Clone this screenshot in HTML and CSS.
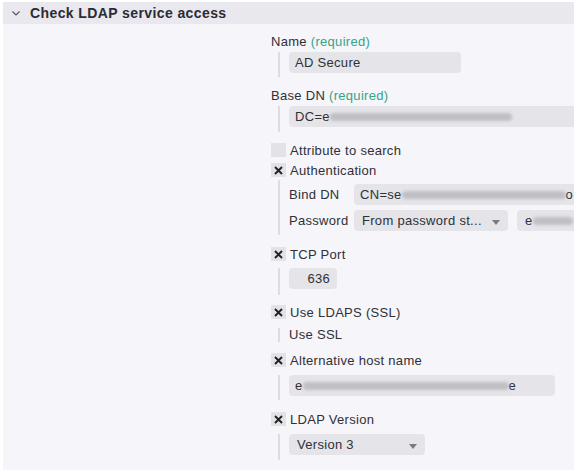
FILE: index.html
```html
<!DOCTYPE html>
<html>
<head>
<meta charset="utf-8">
<link rel="stylesheet" href="styles.css">
</head>
<body>
<div class="page">
  <div class="panel">
    <div class="panel-head">
      <svg class="chev" width="8" height="5" viewBox="0 0 8 5"><path d="M0.5 0.5 L4 4 L7.5 0.5" fill="none" stroke="#555" stroke-width="1.1"/></svg>
      <span class="title">Check LDAP service access</span>
    </div>
    <div class="panel-body">
      <div class="form">
        <div class="label f-name">Name <span class="req">(required)</span></div>
        <div class="block b-name">
          <div class="input w-name">AD Secure</div>
        </div>

        <div class="label f-base">Base DN <span class="req">(required)</span></div>
        <div class="block b-base">
          <div class="input w-base">DC=e<span class="smudge s-base"></span></div>
        </div>

        <div class="check-row r-attr"><span class="cb"></span><span>Attribute to search</span></div>
        <div class="check-row r-auth"><span class="cb"><svg class="x" width="9" height="9" viewBox="0 0 9 9"><path d="M1 1 L8 8 M8 1 L1 8" stroke="#222" stroke-width="1.9"/></svg></span><span>Authentication</span></div>
        <div class="block b-auth">
          <div class="grid">
            <div class="glabel">Bind DN</div>
            <div class="input w-bind">CN=se<span class="smudge s-bind"></span><span class="tail">o</span></div>
            <div class="glabel">Password</div>
            <div class="pw">
              <div class="select w-pwsel">From password st...<span class="arrow"></span></div>
              <div class="input w-pw">e<span class="smudge s-pw"></span></div>
            </div>
          </div>
        </div>

        <div class="check-row r-tcp"><span class="cb"><svg class="x" width="9" height="9" viewBox="0 0 9 9"><path d="M1 1 L8 8 M8 1 L1 8" stroke="#222" stroke-width="1.9"/></svg></span><span>TCP Port</span></div>
        <div class="block b-tcp">
          <div class="input w-port">636</div>
        </div>

        <div class="check-row r-ssl"><span class="cb"><svg class="x" width="9" height="9" viewBox="0 0 9 9"><path d="M1 1 L8 8 M8 1 L1 8" stroke="#222" stroke-width="1.9"/></svg></span><span>Use LDAPS (SSL)</span></div>
        <div class="block b-ssl">
          <div class="plain">Use SSL</div>
        </div>

        <div class="check-row r-alt"><span class="cb"><svg class="x" width="9" height="9" viewBox="0 0 9 9"><path d="M1 1 L8 8 M8 1 L1 8" stroke="#222" stroke-width="1.9"/></svg></span><span>Alternative host name</span></div>
        <div class="block b-alt">
          <div class="input w-alt">e<span class="smudge s-alt"></span>e</div>
        </div>

        <div class="check-row r-ver"><span class="cb"><svg class="x" width="9" height="9" viewBox="0 0 9 9"><path d="M1 1 L8 8 M8 1 L1 8" stroke="#222" stroke-width="1.9"/></svg></span><span>LDAP Version</span></div>
        <div class="block b-ver">
          <div class="select w-ver">Version 3<span class="arrow"></span></div>
        </div>
      </div>
    </div>
  </div>
</div>
</body>
</html>
```

FILE: styles.css
```css
html, body {
  margin: 0;
  padding: 0;
  background: #ffffff;
  overflow: hidden;
}
.page {
  width: 574px;
  height: 470px;
  padding: 2px 0 0 3px;
  box-sizing: border-box;
  font-family: "Liberation Sans", Arial, sans-serif;
  font-size: 13px;
  color: #303036;
  letter-spacing: 0.3px;
}
.panel {
  background: #f5f5fa;
  height: 468px;
  overflow: hidden;
}
.panel-head {
  height: 22px;
  background: #e8e8ee;
  display: flex;
  align-items: center;
  padding-left: 9px;
}
.chev {
  display: block;
  margin-top: 1px;
}
.title {
  margin-left: 10px;
  font-weight: bold;
  font-size: 14px;
  color: #2b2b33;
  letter-spacing: 0.4px;
}
.panel-body {
  padding-left: 268px;
}
.form {
  display: flex;
  flex-direction: column;
  align-items: flex-start;
  padding-top: 10px;
}
.label {
  height: 16px;
  line-height: 16px;
  white-space: nowrap;
}
.req {
  color: #35a385;
}
.block {
  margin-left: 7px;
  border-left: 2px solid #dcdce2;
  padding-left: 9px;
  box-sizing: border-box;
}
.input, .select {
  height: 21px;
  line-height: 21px;
  background: #e4e4e9;
  border-radius: 4px;
  padding: 0 6px;
  box-sizing: border-box;
  white-space: nowrap;
  overflow: hidden;
  position: relative;
}
.select {
  padding-left: 8px;
}
.arrow {
  position: absolute;
  right: 8px;
  top: 10px;
  width: 0;
  height: 0;
  border-left: 4px solid transparent;
  border-right: 4px solid transparent;
  border-top: 5px solid #7a7a80;
}
.smudge {
  display: inline-block;
  vertical-align: middle;
  height: 8px;
  background: #bfbfc4;
  border-radius: 4px;
  filter: blur(1.4px);
  margin-top: -2px;
}
.s-base { width: 182px; }
.s-bind { width: 164px; }
.s-pw { width: 40px; }
.s-alt { width: 206px; }

.b-name { margin-top: 2px; padding-bottom: 4px; }
.w-name { width: 172px; }
.f-base { margin-top: 11px; }
.b-base { margin-top: 2px; padding-bottom: 5px; }
.w-base { width: 330px; }

.check-row {
  height: 20px;
  display: flex;
  align-items: center;
  white-space: nowrap;
}
.cb {
  width: 15px;
  height: 14px;
  background: #e2e2e7;
  margin-right: 4px;
  display: flex;
  align-items: center;
  justify-content: center;
}
.x { display: block; }
.r-attr { margin-top: 8px; }

.b-auth { padding-top: 4px; padding-bottom: 4px; }
.grid {
  display: grid;
  grid-template-columns: 65px auto;
  row-gap: 5px;
  align-items: center;
}
.glabel { white-space: nowrap; }
.w-bind { width: 240px; padding-left: 6px; }
.pw { display: flex; gap: 9px; }
.w-pwsel { width: 154px; }
.w-pw { width: 80px; padding-left: 8px; }

.r-tcp { margin-top: 9px; }
.b-tcp { margin-top: 4px; padding-bottom: 6px; }
.w-port { width: 48px; text-align: right; padding-right: 7px; }

.r-ssl { margin-top: 7px; }
.b-ssl { margin-top: 6px; height: 14px; }
.plain { line-height: 14px; white-space: nowrap; }

.r-alt { margin-top: 8px; }
.b-alt { margin-top: 5px; padding-bottom: 4px; }
.w-alt { width: 266px; }

.r-ver { margin-top: 9px; }
.b-ver { margin-top: 5px; padding-bottom: 5px; }
.w-ver { width: 136px; }
```
